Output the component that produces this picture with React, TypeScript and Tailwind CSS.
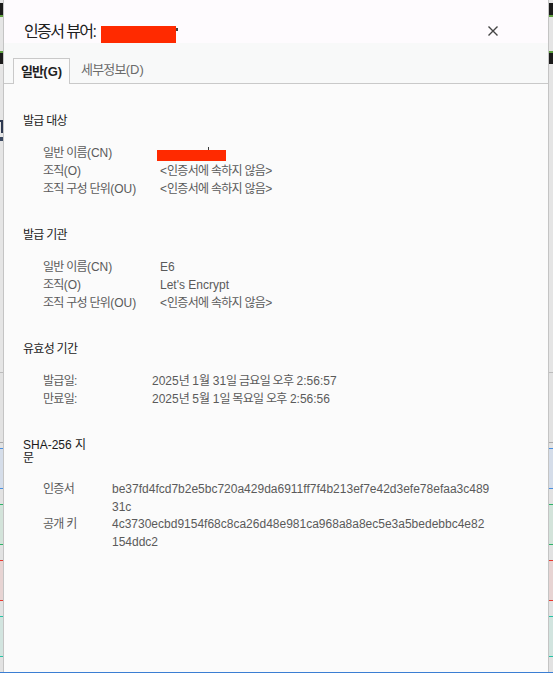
import React from 'react';

type Row = { label: string; value: React.ReactNode };

type Section = {
  title: React.ReactNode;
  cols: string;
  leading: string;
  rows: Row[];
};

const NOT_IN_CERT = '<인증서에 속하지 않음>';

const ko = (text: string) =>
  text.split(/([가-힣]+(?: [가-힣]+)*)/).map((part, i) =>
    /[가-힣]/.test(part) ? (
      <span key={i} className="tracking-[-0.06em]">
        {part}
      </span>
    ) : (
      part
    )
  );

const Redacted = () => (
  <span className="relative inline-block -ml-[3px] mt-[6px] w-[69px] h-[11px] bg-[#ff2a00] align-top">
    <span className="absolute left-[51px] -top-[3px] w-px h-[3px] bg-[#3a3a3a]" />
  </span>
);

const sections: Section[] = [
  {
    title: ko('발급 대상'),
    cols: 'grid-cols-[117px_1fr]',
    leading: 'leading-[18px]',
    rows: [
      { label: '일반 이름(CN)', value: <Redacted /> },
      { label: '조직(O)', value: ko(NOT_IN_CERT) },
      { label: '조직 구성 단위(OU)', value: ko(NOT_IN_CERT) },
    ],
  },
  {
    title: ko('발급 기관'),
    cols: 'grid-cols-[117px_1fr]',
    leading: 'leading-[18px]',
    rows: [
      { label: '일반 이름(CN)', value: 'E6' },
      { label: '조직(O)', value: "Let's Encrypt" },
      { label: '조직 구성 단위(OU)', value: ko(NOT_IN_CERT) },
    ],
  },
  {
    title: ko('유효성 기간'),
    cols: 'grid-cols-[109px_1fr]',
    leading: 'leading-[18px]',
    rows: [
      { label: '발급일:', value: ko('2025년 1월 31일 금요일 오후 2:56:57') },
      { label: '만료일:', value: ko('2025년 5월 1일 목요일 오후 2:56:56') },
    ],
  },
  {
    title: (
      <>
        SHA-256 {ko('지')}
        <br />
        {ko('문')}
      </>
    ),
    cols: 'grid-cols-[69px_1fr]',
    leading: 'leading-[17.5px]',
    rows: [
      {
        label: '인증서',
        value: (
          <>
            <span className="block">be37fd4fcd7b2e5bc720a429da6911ff7f4b213ef7e42d3efe78efaa3c489</span>
            <span className="block">31c</span>
          </>
        ),
      },
      {
        label: '공개 키',
        value: (
          <>
            <span className="block">4c3730ecbd9154f68c8ca26d48e981ca968a8a8ec5e3a5bedebbc4e82</span>
            <span className="block">154ddc2</span>
          </>
        ),
      },
    ],
  },
];

const Backdrop = () => (
  <div className="flex flex-col">
    <div className="h-[3px] bg-[#e5e5e5]" />
    <div className="h-[12px] bg-[#1b1b1b]" />
    <div className="h-[2px] bg-[#5fa040]" />
    <div className="h-[34px] bg-[#e5e5e5]" />
    <div className="h-[2px] bg-[#5fa040]" />
    <div className="h-[11px] bg-[#1b1b1b]" />
    <div className="h-[56px] bg-[#e5e5e5]" />
    <div className="h-[21px] bg-[#e5e5e5]">
      <div className="w-[3px] h-[13px] border-t-2 border-r-2 border-[#2d3850]" />
      <div className="h-[4px]" />
      <div className="w-[3px] h-[4px] bg-[#3b4860]" />
    </div>
    <div className="h-[231px] bg-[#e5e5e5]" />
    <div className="h-px bg-[#bcbcbc]" />
    <div className="h-[69px] bg-[#e2e2e2]" />
    <div className="h-px bg-[#a8a8a8]" />
    <div className="h-[5px] bg-[#e2e2e2]" />
    <div className="h-px bg-[#4a8fe0]" />
    <div className="h-[39px] bg-[#d5dde9]" />
    <div className="h-px bg-[#4a8fe0]" />
    <div className="h-[15px] bg-[#e2e2e2]" />
    <div className="h-px bg-[#2fb36a]" />
    <div className="h-[39px] bg-[#d3e3da]" />
    <div className="h-px bg-[#2fb36a]" />
    <div className="h-[15px] bg-[#e2e2e2]" />
    <div className="h-px bg-[#e8382f]" />
    <div className="h-[39px] bg-[#e7d4d3]" />
    <div className="h-px bg-[#e8382f]" />
    <div className="h-[15px] bg-[#e2e2e2]" />
    <div className="h-px bg-[#27c4a6]" />
    <div className="h-[39px] bg-[#d2e4df]" />
    <div className="h-px bg-[#27c4a6]" />
    <div className="h-[15px] bg-[#e2e2e2]" />
    <div className="h-px bg-[#3b7ed3]" />
  </div>
);

export default function App() {
  return (
    <div className="relative w-[553px] h-[673px] overflow-hidden font-['Liberation_Sans','Noto_Sans_CJK_KR',sans-serif]">
      <Backdrop />

      {/* certificate viewer dialog */}
      <div className="absolute left-[3px] top-0 w-[546px] h-[672px] flex flex-col border-x border-[#c4c4c4] bg-[#fbfbfb]">
        <div className="h-[43px] flex items-start justify-between pl-[20px] pr-[50px] pt-[22px] bg-[#fefbfe]">
          <div className="flex items-start text-[16px] leading-[20px] text-[#202020]">
            <span className="w-[77px] whitespace-nowrap">
              <span className="tracking-[-0.1em]">인증서 뷰어</span>:
            </span>
            <span className="relative mt-[4px] w-[75px] h-[17px] bg-[#ff2a00]">
              <span className="absolute -right-[2px] top-[2px] w-[2px] h-[3px] bg-[#444]" />
            </span>
          </div>
          <svg width="10" height="10" viewBox="0 0 10 10" className="mt-[4px]">
            <path d="M0.5 0.5L9.5 9.5M9.5 0.5L0.5 9.5" stroke="#444" strokeWidth="1.4" />
          </svg>
        </div>

        <div className="h-[41px] flex items-end pl-[9px] border-b border-[#c9c9c9] bg-[#f8f9f9]">
          <div className="relative -mb-px w-[57px] h-[26px] border border-b-0 border-[#c9c9c9] bg-[#fbfbfb] text-center text-[13px] leading-[25px] font-bold text-[#1f1f1f]">
            {ko('일반')}(G)
          </div>
          <div className="ml-[11px] h-[26px] text-[13px] leading-[25px] text-[#6b6b6b]">
            {ko('세부정보')}(D)
          </div>
        </div>

        <div className="flex flex-col pt-[31px] pl-[19px] text-[12px]">
          {sections.map((s, i) => (
            <div key={i} className={i > 0 ? 'mt-[31px]' : ''}>
              <div className="w-[80px] leading-[13px] text-[#1a1a1a]">{s.title}</div>
              <div className={`mt-[16px] pl-[20px] grid ${s.cols} ${s.leading} text-[#5a5a5a]`}>
                {s.rows.map((r) => (
                  <React.Fragment key={r.label}>
                    <div className="whitespace-nowrap">{ko(r.label)}</div>
                    <div className="whitespace-nowrap">{r.value}</div>
                  </React.Fragment>
                ))}
              </div>
            </div>
          ))}
        </div>
      </div>
    </div>
  );
}
